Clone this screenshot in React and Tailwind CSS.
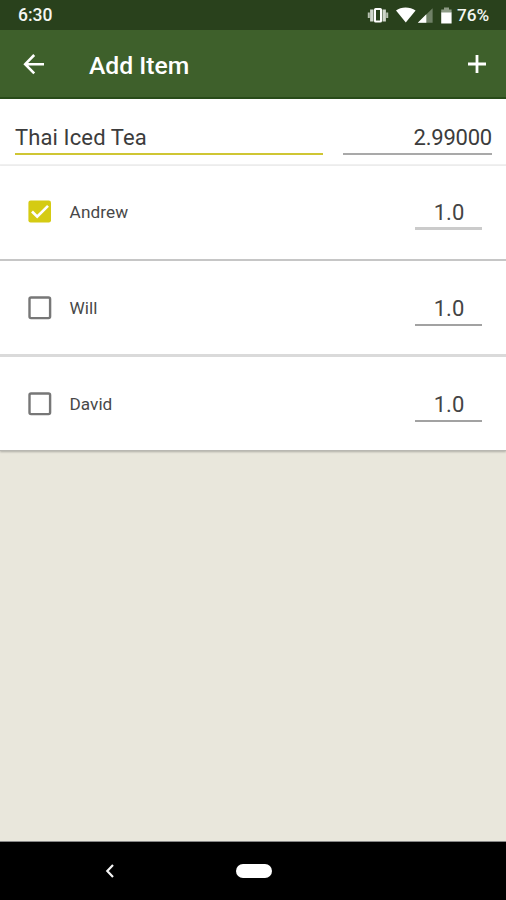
import React from "react";

const people = [
  { name: "Andrew", share: "1.0", checked: true, row: "h-[95px] border-b-2 border-[#c6c6c6] pb-[1px]", spacing: "tracking-[0.1px]", value: "pt-[2px]", field: "pt-0", line: "h-[3px] bg-[#cbcbcb]" },
  { name: "Will", share: "1.0", checked: false, row: "h-[96px] border-b-[3px] border-[#dadada]", spacing: "tracking-normal", value: "pt-px", field: "pt-[1px]", line: "h-[2px] bg-[#a2a2a2]" },
  { name: "David", share: "1.0", checked: false, row: "h-[94px] border-b border-[#b9b8b2]", spacing: "tracking-normal", value: "pt-px", field: "pt-[2px]", line: "h-[2px] bg-[#a2a2a2]" },
];

function StatusBar() {
  return (
    <div className="flex h-[30px] shrink-0 items-center justify-between bg-[#29411c] pl-[18px] pr-[14px] text-[17.5px] font-medium text-[#f4f6f2]">
      <span className="pt-px leading-[33px]">6:30</span>
      <div className="flex items-center">
        <svg className="h-[30px] w-[86px]" viewBox="367 0 86 30" fill="none">
          <path d="M368.8 12.5v5.5M387.2 12.5v5.5" stroke="#b9c3b3" strokeWidth="2" />
          <path d="M371.8 9.5v12M384.2 9.5v12" stroke="#cfd6cb" strokeWidth="3.4" />
          <rect x="375" y="9" width="6" height="12.6" rx=".6" stroke="#fff" strokeWidth="2" />
          <path d="M396 10.4C401 6.4 410 6.4 415.6 10.4L405.8 22.4Z" fill="#fff" />
          <path d="M432.6 8.2V22.7H417.8Z" fill="#6f8066" />
          <path d="M426.3 14.3V22.7H417.8Z" fill="#fff" />
          <path d="M444 7.5h5v2h2.6v3.5h-10.4V9.5H444Z" fill="#8d9b85" />
          <path d="M441.2 12.5h10.4v11h-10.4Z" fill="#fff" />
        </svg>
        <span className="ml-[4px] w-[35px] pt-px text-[17.2px] leading-[33px]">76%</span>
      </div>
    </div>
  );
}

function AppBar() {
  return (
    <header className="flex h-[69px] shrink-0 items-center border-b-2 border-[#284b19] bg-[#3e602b] pl-[22px] pr-[18px]">
      <svg className="h-[24px] w-[24px]" viewBox="0 0 24 24" fill="none" stroke="#fff" strokeWidth="2.6">
        <path d="M22 12.2H3M12.2 3L3.2 12.2L12.2 21.4" />
      </svg>
      <h1 className="ml-[43px] flex-1 pt-[5px] text-[24.7px] font-medium leading-[30px] text-white">Add Item</h1>
      <svg className="h-[22px] w-[22px]" viewBox="0 0 22 22" stroke="#fff" strokeWidth="2.8">
        <path d="M11 2v18M2 11h18" />
      </svg>
    </header>
  );
}

function CheckBox({ checked }) {
  return (
    <svg className="h-[24px] w-[24px]" viewBox="0 0 24 24" fill="none">
      {checked ? (
        <>
          <rect x=".4" y=".5" width="22.6" height="22" rx="2.2" fill="#d5cb13" />
          <path d="M4 11.5L9.2 16.7L20 5.9" stroke="#fff" strokeWidth="2.7" />
        </>
      ) : (
        <rect x="1.5" y="1.5" width="20.6" height="20.6" rx="1.6" stroke="#777" strokeWidth="2.4" />
      )}
    </svg>
  );
}

function PersonRow({ person }) {
  return (
    <li className={`flex items-center bg-white pl-[28px] pr-[24px] ${person.row}`}>
      <CheckBox checked={person.checked} />
      <span className={`ml-[17.6px] flex-1 text-[17.2px] leading-[24px] text-[#484848] ${person.spacing}`}>{person.name}</span>
      <div className={`flex w-[67px] flex-col items-center ${person.field}`}>
        <span className={`h-[33px] pl-px text-[22px] leading-[33px] text-[#444] ${person.value}`}>{person.share}</span>
        <span className={`w-full shrink-0 ${person.line}`} />
      </div>
    </li>
  );
}

export default function App() {
  return (
    <div className="flex h-[900px] w-[506px] flex-col overflow-hidden bg-[#e9e7dc] font-['Roboto',sans-serif]">
      <StatusBar />
      <AppBar />
      <div className="flex h-[67px] shrink-0 justify-between border-b-2 border-[#f0f0f0] bg-white pl-[15px] pr-[14px] pt-[22px] text-[22px] leading-[33px] text-[#3c3c3c]">
        <div className="h-[34px] w-[308px] border-b-2 border-[#cfc634] tracking-[0.12px]">Thai Iced Tea</div>
        <div className="h-[34px] w-[149px] border-b-2 border-[#a9a9a9] text-right tracking-[-0.22px]">2.99000</div>
      </div>
      <ul className="shrink-0 shadow-[0_1px_2px_rgba(0,0,0,0.25)]">
        {people.map((person) => (
          <PersonRow key={person.name} person={person} />
        ))}
      </ul>
      <main className="flex-1" />
      <nav className="flex h-[59px] shrink-0 items-center border-t border-[#888] bg-black pl-[104px]">
        <svg className="h-[16px] w-[12px]" viewBox="0 0 12 16" fill="none" stroke="#f5f5f5" strokeWidth="2.2">
          <path d="M9 2L3.3 8L9 14" />
        </svg>
        <span className="ml-[120px] h-[14px] w-[36px] rounded-full bg-white" />
      </nav>
    </div>
  );
}
